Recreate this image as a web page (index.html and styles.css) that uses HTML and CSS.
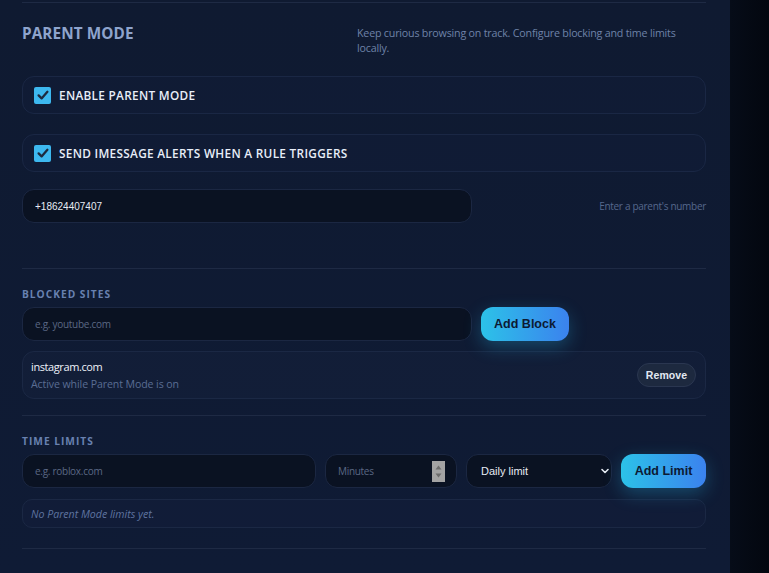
FILE: index.html
```html
<!DOCTYPE html>
<html lang="en">
<head>
<meta charset="utf-8">
<title>Parent Mode</title>
<link rel="stylesheet" href="styles.css">
</head>
<body>
<div class="page">
  <main class="panel">
    <hr class="divider divider-top">
    <header class="head">
      <h1 class="title">Parent Mode</h1>
      <p class="desc">Keep curious browsing on track. Configure blocking and time limits locally.</p>
    </header>

    <label class="toggle-card">
      <span class="check"><svg viewBox="0 0 16 16" width="16" height="16"><path d="M3.6 8.4l3 3 5.8-6.6" fill="none" stroke="#1d2a3f" stroke-width="2.3" stroke-linecap="round" stroke-linejoin="round"/></svg></span>
      <span class="toggle-label">Enable Parent Mode</span>
    </label>

    <label class="toggle-card toggle-second">
      <span class="check"><svg viewBox="0 0 16 16" width="16" height="16"><path d="M3.6 8.4l3 3 5.8-6.6" fill="none" stroke="#1d2a3f" stroke-width="2.3" stroke-linecap="round" stroke-linejoin="round"/></svg></span>
      <span class="toggle-label">Send iMessage alerts when a rule triggers</span>
    </label>

    <div class="row-split phone-row">
      <input class="field field-value" type="text" value="+18624407407">
      <span class="hint">Enter a parent's number</span>
    </div>

    <hr class="divider divider-mid">

    <section class="section">
      <h2 class="section-title">Blocked Sites</h2>
      <div class="row-split">
        <input class="field" type="text" placeholder="e.g. youtube.com">
        <button class="btn-primary btn-block">Add Block</button>
      </div>
      <div class="item-card">
        <div class="item-text">
          <div class="item-name">instagram.com</div>
          <div class="item-sub">Active while Parent Mode is on</div>
        </div>
        <button class="btn-remove">Remove</button>
      </div>
    </section>

    <hr class="divider divider-low">

    <section class="section">
      <h2 class="section-title">Time Limits</h2>
      <div class="row-limits">
        <input class="field" type="text" placeholder="e.g. roblox.com">
        <div class="field field-number">
          <input class="number-input" type="text" placeholder="Minutes">
          <span class="spinner">
            <svg viewBox="0 0 13 21" width="13" height="21"><rect width="13" height="21" fill="#a3a3a3"/><path d="M3.5 8.5h6l-3-4z" fill="#6c6c6c"/><path d="M3.5 12.5h6l-3 4z" fill="#6c6c6c"/></svg>
          </span>
        </div>
        <div class="select-wrap">
          <select class="field select">
            <option>Daily limit</option>
          </select>
          <svg class="chev" viewBox="0 0 10 10" width="10" height="10"><path d="M2 3.5l3 3 3-3" fill="none" stroke="#e6ebf3" stroke-width="1.6" stroke-linecap="round" stroke-linejoin="round"/></svg>
        </div>
        <button class="btn-primary btn-limit">Add Limit</button>
      </div>
      <div class="empty-card">No Parent Mode limits yet.</div>
    </section>

    <hr class="divider divider-bottom">
  </main>
  <aside class="side"></aside>
</div>
</body>
</html>
```
FILE: styles.css
```css
* { box-sizing: border-box; }
html, body { margin: 0; height: 100%; }
body {
  background: #050a15;
  font-family: "Open Sans", "Noto Sans", sans-serif;
  overflow: hidden;
}
.page {
  display: flex;
  height: 573px;
}
.panel {
  width: 730px;
  flex: none;
  background: linear-gradient(180deg, #0f1a31 0%, #0f1b35 100%);
  padding: 2px 24px 0 22px;
}
.side {
  flex: 1;
  background: linear-gradient(90deg, #060c18, #03070f);
}
.divider {
  border: 0;
  border-top: 1px solid #1e2a44;
  margin: 0;
  height: 0;
}
.head {
  display: flex;
  justify-content: space-between;
  align-items: flex-start;
  margin-top: 18px;
}
.title {
  margin: 2px 0 0;
  font-size: 15.3px;
  font-weight: 700;
  letter-spacing: 0.1px;
  text-transform: uppercase;
  color: #8ea4cd;
  line-height: 20px;
}
.desc {
  margin: 5px 0 0;
  width: 349px;
  font-size: 10.7px;
  letter-spacing: -0.2px;
  line-height: 15px;
  color: #6e82a8;
}
.toggle-card {
  display: flex;
  align-items: center;
  gap: 8px;
  height: 38px;
  margin-top: 20px;
  padding: 0 11px;
  border: 1px solid #1a2744;
  border-radius: 12px;
  background: rgba(20, 32, 60, 0.35);
}
.toggle-second { margin-top: 20px; }
.check {
  width: 17px;
  height: 17px;
  border-radius: 2px;
  background: #3db8ef;
  display: flex;
  align-items: center;
  justify-content: center;
}
.check svg { display: block; }
.toggle-label {
  font-size: 11.8px;
  font-weight: 600;
  letter-spacing: 0.3px;
  text-transform: uppercase;
  color: #e8eef9;
}
.row-split {
  display: grid;
  grid-template-columns: 2fr 1fr;
  gap: 9px;
  align-items: center;
}
.phone-row { margin-top: 17px; }
.field {
  height: 34px;
  width: 100%;
  border: 1px solid #1b2742;
  border-radius: 12px;
  background: #0a1222;
  color: #e6ebf3;
  padding: 0 12px;
  font-family: "Open Sans", sans-serif;
  font-size: 10px;
  letter-spacing: -0.28px;
  outline: none;
}
.field::placeholder, .number-input::placeholder { color: #5b6884; }
.field-value {
  font-family: "Liberation Sans", Arial, sans-serif;
  font-size: 10px;
  letter-spacing: 0;
}
.hint {
  justify-self: end;
  font-size: 10px;
  letter-spacing: -0.3px;
  color: #56688d;
}
.divider-mid { margin-top: 45px; }
.section-title {
  margin: 0 0 6px;
  font-size: 10.2px;
  font-weight: 700;
  letter-spacing: 1px;
  text-transform: uppercase;
  color: #6881b0;
  line-height: 13px;
}
.section { padding-top: 19px; }
.btn-primary {
  justify-self: start;
  height: 34px;
  border: 0;
  border-radius: 12px;
  background: linear-gradient(90deg, #2cc2e8 0%, #3b82ee 100%);
  color: #0c1a33;
  font-family: "Liberation Sans", Arial, sans-serif;
  font-weight: 700;
  font-size: 12.5px;
  box-shadow: 0 6px 18px rgba(40, 180, 230, 0.3);
}
.btn-block { width: 88px; }
.item-card {
  display: flex;
  align-items: center;
  justify-content: space-between;
  margin-top: 10px;
  height: 48px;
  padding: 0 9px 0 8px;
  border: 1px solid #1b2844;
  border-radius: 12px;
  background: rgba(22, 34, 62, 0.4);
}
.item-name {
  font-size: 11px;
  letter-spacing: -0.4px;
  color: #eef2f9;
  line-height: 16px;
}
.item-sub {
  margin-top: 2px;
  font-size: 10.6px;
  letter-spacing: -0.1px;
  color: #5a6d93;
  line-height: 14px;
}
.btn-remove {
  height: 24px;
  width: 59px;
  border: 1px solid #2a3650;
  border-radius: 12px;
  background: #1d293f;
  color: #e2e8f2;
  font-family: "Liberation Sans", Arial, sans-serif;
  font-weight: 700;
  font-size: 10.5px;
  letter-spacing: 0.1px;
  padding: 0;
}
.divider-low { margin-top: 16px; }
.row-limits {
  display: grid;
  grid-template-columns: 294px 132px 146px 1fr;
  gap: 9px;
  align-items: center;
  margin-top: 1px;
}
.field-number {
  display: flex;
  align-items: center;
  padding: 0 11px 0 12px;
}
.number-input {
  flex: 1;
  min-width: 0;
  border: 0;
  background: transparent;
  color: #e6ebf3;
  font-family: "Open Sans", sans-serif;
  font-size: 10px;
  letter-spacing: -0.3px;
  outline: none;
  padding: 0;
}
.spinner { display: flex; }
.spinner svg { display: block; }
.select-wrap {
  display: grid;
  align-items: center;
}
.select-wrap > * { grid-area: 1 / 1; }
.select {
  appearance: none;
  -webkit-appearance: none;
  font-family: "Liberation Sans", Arial, sans-serif;
  font-size: 11px;
  letter-spacing: 0;
  padding-left: 14px;
}
.chev { justify-self: end; margin-right: 2px; pointer-events: none; }
.btn-limit { width: 85px; }
.empty-card {
  margin-top: 11px;
  height: 29px;
  display: flex;
  align-items: center;
  padding: 0 8px;
  border: 1px solid #1b2844;
  border-radius: 10px;
  background: rgba(22, 34, 62, 0.3);
  font-size: 10.6px;
  font-style: italic;
  color: #5f74a0;
}
.divider-bottom { margin-top: 20px; }
```
